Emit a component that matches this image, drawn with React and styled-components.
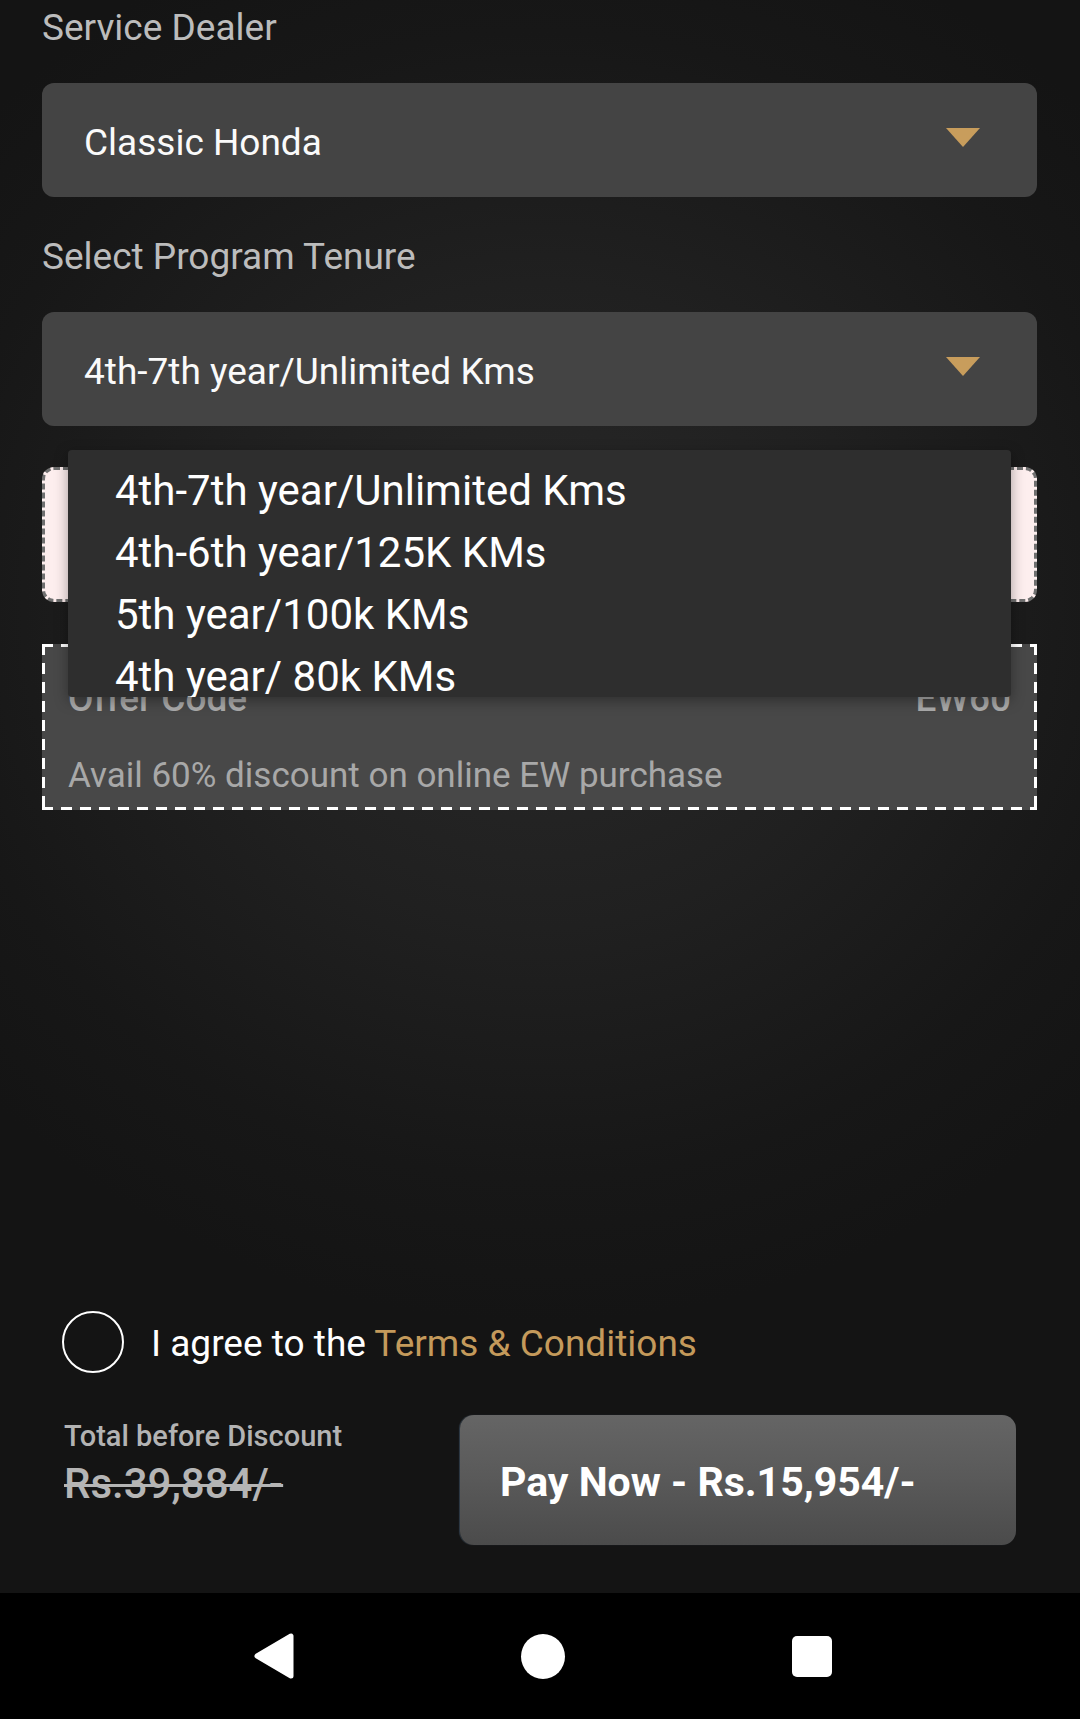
import React from "react";
import styled, { createGlobalStyle } from "styled-components";

const GlobalStyle = createGlobalStyle`
  html, body {
    margin: 0;
    padding: 0;
    background: #141414;
  }
  body {
    font-family: Roboto, "Liberation Sans", Arial, sans-serif;
    -webkit-font-smoothing: antialiased;
  }
  * {
    box-sizing: border-box;
  }
`;

const Screen = styled.div`
  width: 1080px;
  height: 1719px;
  display: flex;
  flex-direction: column;
  overflow: hidden;
  position: relative;
`;

const Content = styled.div`
  flex: 1;
  display: flex;
  flex-direction: column;
  padding: 0 43px 48px 42px;
  background: radial-gradient(
    ellipse 70% 45% at 50% 38%,
    #292929 0%,
    #202020 45%,
    #171717 80%,
    #141414 100%
  );
  position: relative;
`;

const FieldLabel = styled.div`
  height: 56px;
  line-height: 56px;
  font-size: 37px;
  color: #bcbcbc;
  margin-top: ${(p) => p.$top || 0}px;
`;

const Select = styled.div`
  height: 114px;
  margin-top: 27px;
  background: #444444;
  border-radius: 12px;
  display: flex;
  align-items: center;
  justify-content: space-between;
  padding: 4px 57px 0 42px;
  font-size: 37px;
  color: #fafafa;
`;

const Caret = styled.span`
  width: 0;
  height: 0;
  border-left: 17px solid transparent;
  border-right: 17px solid transparent;
  border-top: 19px solid #c89d5c;
  margin-bottom: 10px;
`;

const PlanCard = styled.div`
  height: 135px;
  margin-top: 41px;
  background: #fdeeee;
  border: 3px dashed #6f6f6f;
  border-radius: 12px;
`;

const dash = "#ffffff 0 11px, transparent 11px 19px";

const OfferBox = styled.div`
  height: 166px;
  margin-top: 42px;
  background-color: #484848;
  background-image: repeating-linear-gradient(90deg, ${dash}),
    repeating-linear-gradient(90deg, ${dash}),
    repeating-linear-gradient(180deg, ${dash}),
    repeating-linear-gradient(180deg, ${dash});
  background-size: 100% 3px, 100% 3px, 3px 100%, 3px 100%;
  background-position: top left, bottom left, top left, top right;
  background-repeat: no-repeat;
  padding: 25px 26px 0 26px;
  display: flex;
  flex-direction: column;
`;

const OfferRow = styled.div`
  height: 58px;
  display: flex;
  justify-content: space-between;
  align-items: center;
  font-size: 37px;
  font-weight: 500;
  color: #ababab;
`;

const OfferText = styled.div`
  margin-top: 27px;
  line-height: 44px;
  font-size: 35px;
  color: #a8a8a8;
`;

const Menu = styled.div`
  position: absolute;
  left: 68px;
  top: 450px;
  width: 943px;
  height: 247px;
  overflow: hidden;
  background: #2e2e2e;
  border-radius: 4px;
  padding-top: 10px;
  box-shadow: 0 4px 14px rgba(0, 0, 0, 0.35);
`;

const MenuItem = styled.div`
  height: 62px;
  line-height: 62px;
  padding-left: 47px;
  font-size: 42px;
  color: #ffffff;
  white-space: nowrap;
`;

const Footer = styled.div`
  margin-top: auto;
  padding: 0 21px 0 20px;
  display: flex;
  flex-direction: column;
  gap: 43px;
`;

const AgreeRow = styled.div`
  display: flex;
  align-items: center;
  gap: 27px;
  height: 61px;
`;

const Radio = styled.span`
  width: 62px;
  height: 62px;
  border-radius: 50%;
  border: 2.5px solid #ffffff;
  flex-shrink: 0;
`;

const AgreeText = styled.span`
  font-size: 37px;
  color: #ffffff;
  margin-top: 3px;
`;

const TermsLink = styled.span`
  color: #c49a5b;
`;

const TotalRow = styled.div`
  display: flex;
  justify-content: space-between;
  align-items: flex-start;
`;

const TotalBlock = styled.div`
  display: flex;
  flex-direction: column;
  padding-top: 3px;
  padding-left: 2px;
`;

const TotalLabel = styled.div`
  font-size: 29px;
  font-weight: 500;
  line-height: 36px;
  color: #b3b3b3;
`;

const OldPrice = styled.div`
  font-size: 42px;
  font-weight: 500;
  line-height: 60px;
  color: #b5b5b5;
  text-decoration: line-through;
  text-decoration-thickness: 3px;
`;

const PayButton = styled.button`
  width: 556px;
  height: 130px;
  border: none;
  border-radius: 14px;
  background: linear-gradient(180deg, #656565 0%, #595959 50%, #4b4b4b 100%);
  color: #ffffff;
  font-family: Roboto, "Liberation Sans", Arial, sans-serif;
  font-size: 41px;
  font-weight: 700;
  text-align: left;
  padding: 4px 0 0 40px;
  box-shadow: -1px 0 1px rgba(90, 120, 150, 0.4);
`;

const NavBar = styled.div`
  height: 126px;
  background: #000000;
  display: flex;
  justify-content: center;
  align-items: center;
  gap: 225px;
  padding-left: 6px;
`;

const NavSlot = styled.div`
  width: 44px;
  height: 46px;
  display: flex;
  align-items: center;
  justify-content: center;
`;

const HomeDot = styled.span`
  width: 44px;
  height: 45px;
  border-radius: 50%;
  background: #ffffff;
`;

const RecentSquare = styled.span`
  width: 40px;
  height: 41px;
  border-radius: 5px;
  background: #ffffff;
`;

const BackIcon = () => (
  <svg width="42" height="46" viewBox="0 0 42 46">
    <path
      d="M38 3 L38 43 L4 23 Z"
      fill="#fff"
      stroke="#fff"
      strokeWidth="5"
      strokeLinejoin="round"
    />
  </svg>
);

const tenures = [
  "4th-7th year/Unlimited Kms",
  "4th-6th year/125K KMs",
  "5th year/100k KMs",
  "4th year/ 80k KMs",
];

export default function App() {
  return (
    <>
      <GlobalStyle />
      <Screen>
        <Content>
          <FieldLabel>Service Dealer</FieldLabel>
          <Select>
            <span>Classic Honda</span>
            <Caret />
          </Select>

          <FieldLabel $top={32}>Select Program Tenure</FieldLabel>
          <Select>
            <span>4th-7th year/Unlimited Kms</span>
            <Caret />
          </Select>

          <PlanCard />

          <OfferBox>
            <OfferRow>
              <span>Offer Code</span>
              <span>EW60</span>
            </OfferRow>
            <OfferText>Avail 60% discount on online EW purchase</OfferText>
          </OfferBox>

          <Menu>
            {tenures.map((t) => (
              <MenuItem key={t}>{t}</MenuItem>
            ))}
          </Menu>

          <Footer>
            <AgreeRow>
              <Radio />
              <AgreeText>
                I agree to the <TermsLink>Terms &amp; Conditions</TermsLink>
              </AgreeText>
            </AgreeRow>
            <TotalRow>
              <TotalBlock>
                <TotalLabel>Total before Discount</TotalLabel>
                <OldPrice>Rs.39,884/-</OldPrice>
              </TotalBlock>
              <PayButton>Pay Now - Rs.15,954/-</PayButton>
            </TotalRow>
          </Footer>
        </Content>

        <NavBar>
          <NavSlot>
            <BackIcon />
          </NavSlot>
          <NavSlot>
            <HomeDot />
          </NavSlot>
          <NavSlot>
            <RecentSquare />
          </NavSlot>
        </NavBar>
      </Screen>
    </>
  );
}
